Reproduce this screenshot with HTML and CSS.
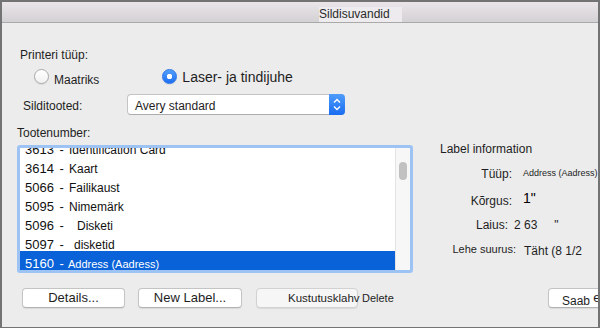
FILE: index.html
```html
<!DOCTYPE html>
<html lang="et">

<head>
    <meta charset="utf-8">
    <title>Sildisuvandid</title>
    <link rel="stylesheet" href="styles.css">
</head>

<body>
    <!-- dialog window, title bar on top and the options below -->
    <div id="dialog">
        <div class="titlebar"><span class="title">Sildisuvandid</span></div>

        <div class="content">
            <div class="caption printer-caption">Printeri tüüp:</div>

            <div class="radios">
                <label class="radio radio-first"><span class="dot"></span><span class="radio-text small">Maatriks</span></label>
                <label class="radio checked"><span class="dot"></span><span class="radio-text big">Laser- ja tindijuhe</span></label>
            </div>

            <div class="vendor-row">
                <span class="caption vendor-caption">Silditooted:</span>
                <div class="popup">
                    <span class="popup-value">Avery standard</span>
                    <span class="stepper">
                        <svg width="16" height="21" viewBox="0 0 16 21">
                            <path d="M5 8.5 L8 5.5 L11 8.5" fill="none" stroke="#fff" stroke-width="1.4" />
                            <path d="M5 12.5 L8 15.5 L11 12.5" fill="none" stroke="#fff" stroke-width="1.4" />
                        </svg>
                    </span>
                </div>
            </div>

            <div class="middle">
                <div class="left">
                    <div class="caption number-caption">Tootenumber:</div>
                    <div class="listbox">
                        <div class="list-inner">
                            <div class="rows">
                                <div class="item"><span class="num">3613 -</span><span class="name">Identification Card</span></div>
                                <div class="item"><span class="num">3614 -</span><span class="name">Kaart</span></div>
                                <div class="item"><span class="num">5066 -</span><span class="name">Failikaust</span></div>
                                <div class="item"><span class="num">5095 -</span><span class="name">Nimemärk</span></div>
                                <div class="item"><span class="num">5096 -</span><span class="name shift-lg">Disketi</span></div>
                                <div class="item"><span class="num">5097 -</span><span class="name shift-sm">disketid</span></div>
                                <div class="item selected"><span class="num">5160 -</span><span class="name name-small">Address (Aadress)</span></div>
                            </div>
                            <div class="scrollbar"><div class="thumb"></div></div>
                        </div>
                    </div>
                </div>

                <div class="info">
                    <div class="info-title">Label information</div>
                    <div class="info-line"><span class="key">Tüüp:</span><span class="val val-tiny">Address (Aadress)</span></div>
                    <div class="info-line"><span class="key">Kõrgus:</span><span class="val val-big">1"</span></div>
                    <div class="info-line"><span class="key key-tight">Laius:</span><span class="val val-near">2 63</span><span class="inch">"</span></div>
                    <div class="info-line"><span class="key key-wide">Lehe suurus:</span><span class="val val-low">Täht (8 1/2</span></div>
                </div>
            </div>

            <div class="buttons">
                <button class="btn btn-details">Details...</button>
                <button class="btn btn-new">New Label...</button>
                <button class="btn btn-delete">Kustutusklahv</button>
                <span class="delete-text">Delete</span>
                <button class="btn btn-save">Saab <span class="save-e">e</span></button>
            </div>
        </div>
    </div>
</body>

</html>
```

FILE: styles.css
```css
html {
    background: #ffffff;
}

body {
    margin: 0;
    font-family: "Liberation Sans", Arial, sans-serif;
    color: #1e1e1e;
}

#dialog {
    width: 600px;
    height: 328px;
    box-sizing: border-box;
    border: 2px solid #737373;
    border-bottom-width: 1px;
    background: #ececec;
    overflow: hidden;
}

/* title bar */
.titlebar {
    height: 20px;
    padding-left: 317px;
    border-bottom: 1px solid #a9a9a9;
    background: linear-gradient(#e9e5e9, #d4d1d4);
}

.title {
    display: inline-block;
    width: 83px;
    height: 15px;
    margin-top: 5px;
    line-height: 15px;
    font-size: 12px;
    color: #2a2a2a;
    background: #eeebee;
}

.content {
    padding: 25px 0 0 15px;
}

.caption {
    font-size: 12px;
    line-height: 15px;
}

.printer-caption {
    margin-left: 3px;
}

/* radio buttons */
.radios {
    display: flex;
    margin-top: 6px;
    height: 16px;
    margin-left: 17px;
}

.radio {
    display: flex;
    align-items: flex-start;
}

.radio-first {
    margin-right: 63px;
}

.dot {
    width: 15px;
    height: 15px;
    box-sizing: border-box;
    border: 1px solid #a9a9a9;
    border-radius: 50%;
    background: linear-gradient(#ffffff, #f1f1f1);
    box-shadow: 0 1px 1px rgba(0, 0, 0, 0.08);
    margin-right: 5px;
}

.checked .dot {
    border-color: #2a74e8;
    background: radial-gradient(circle, #ffffff 0, #ffffff 2.5px, transparent 3px), linear-gradient(#55a0fc, #1b6ef2);
}

.radio-text {
    line-height: 16px;
}

.small {
    font-size: 12px;
    padding-top: 3px;
}

.big {
    font-size: 14px;
}

/* vendor popup */
.vendor-row {
    display: flex;
    align-items: flex-start;
    margin-top: 9px;
    height: 21px;
}

.vendor-caption {
    width: 104px;
    margin-left: 6px;
    margin-top: 5px;
}

.popup {
    display: flex;
    width: 218px;
    height: 21px;
    box-sizing: border-box;
    border: 1px solid #c4c4c4;
    border-bottom-color: #acacac;
    border-right: none;
    border-radius: 4px;
    background: #ffffff;
}

.popup-value {
    flex: 1;
    padding: 4px 0 0 7px;
    line-height: 15px;
    font-size: 12px;
}

.stepper {
    width: 16px;
    height: 21px;
    margin-top: -1px;
    border-radius: 0 4px 4px 0;
    background: linear-gradient(#4f9dfc, #196cf1);
}

.stepper svg {
    display: block;
}

/* list and label info */
.middle {
    display: flex;
    margin-top: 11px;
}

.listbox {
    width: 396px;
    height: 128px;
    box-sizing: border-box;
    margin-top: 4px;
    border: 3px solid #9dc3f4;
    border-radius: 3px;
    background: #ffffff;
}

.list-inner {
    display: flex;
    height: 100%;
}

.rows {
    flex: 1;
    overflow: hidden;
}

.rows .item:first-child {
    margin-top: -11px;
}

.item {
    height: 19px;
    box-sizing: border-box;
    padding: 4px 0 0 5px;
    line-height: 15px;
    white-space: nowrap;
    color: #111111;
}

.num {
    display: inline-block;
    width: 44px;
    font-size: 13px;
    word-spacing: 2px;
}

.name {
    font-size: 12px;
}

.shift-lg {
    margin-left: 8px;
}

.shift-sm {
    margin-left: 5px;
}

.name-small {
    font-size: 11px;
    margin-left: -1px;
}

.selected {
    background: #0a62d8;
    color: #ffffff;
}

.scrollbar {
    width: 14px;
    border-left: 1px solid #e4e4e4;
    background: #f7f7f7;
}

.thumb {
    width: 8px;
    height: 18px;
    margin: 14px 0 0 3px;
    border-radius: 4px;
    background: #c1c1c1;
}

.info {
    margin-left: 27px;
    padding-top: 11px;
    font-size: 12px;
    line-height: 24px;
    white-space: nowrap;
}

.key {
    display: inline-block;
    width: 72px;
    box-sizing: border-box;
    text-align: right;
}

.key-tight {
    padding-right: 4px;
}

.key-wide {
    width: 76px;
    font-size: 11px;
}

.val {
    margin-left: 11px;
}

.val-tiny {
    font-size: 9px;
    vertical-align: 2px;
}

.val-big {
    font-size: 14px;
    color: #000000;
    vertical-align: 2px;
}

.val-near {
    margin-left: 2px;
}

.inch {
    margin-left: 17px;
}

.val-low {
    margin-left: 8px;
    vertical-align: -2px;
}

/* bottom buttons */
.buttons {
    display: flex;
    align-items: center;
    margin-top: 15px;
    height: 20px;
}

.btn {
    height: 20px;
    box-sizing: border-box;
    padding: 0;
    border: 1px solid #c4c4c4;
    border-bottom-color: #b2b2b2;
    border-radius: 4px;
    background: #ffffff;
    box-shadow: 0 1px 1px rgba(0, 0, 0, 0.08);
    font-family: "Liberation Sans", Arial, sans-serif;
    font-size: 13px;
    line-height: 18px;
    color: #1e1e1e;
    white-space: nowrap;
}

.btn-details {
    width: 103px;
    margin-left: 5px;
}

.btn-new {
    width: 104px;
    margin-left: 13px;
}

.btn-delete {
    width: 102px;
    margin-left: 14px;
    padding-left: 31px;
    text-align: left;
    font-size: 11.5px;
    overflow: visible;
    background: #f6f6f6;
    border-color: #d2d2d2;
}

.delete-text {
    margin-left: 4px;
    font-size: 11px;
}

.btn-save {
    width: 70px;
    margin-left: auto;
    margin-right: -20px;
    padding-left: 13px;
    text-align: left;
    font-size: 12px;
}

.save-e {
    font-size: 13px;
    vertical-align: 3px;
}
```
